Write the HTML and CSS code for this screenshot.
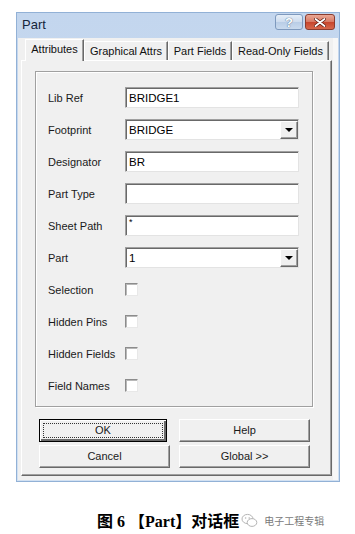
FILE: index.html
```html
<!DOCTYPE html>
<html>
<head>
  <title>Part</title>
  <link rel="stylesheet" href="styles.css">
</head>
<body>
  <div class="window">
    <div class="titlebar">
      <span class="title">Part</span>
      <div class="title-buttons">
        <span class="tbtn help">?</span>
        <span class="tbtn close">
          <svg width="12" height="9" viewBox="0 0 12 9">
            <path d="M1.5 1 L10.5 8 M10.5 1 L1.5 8" stroke="#5a1a10" stroke-width="3.2" stroke-linecap="round"/>
            <path d="M1.5 1 L10.5 8 M10.5 1 L1.5 8" stroke="#fff" stroke-width="1.8" stroke-linecap="round"/>
          </svg>
        </span>
      </div>
    </div>
    <div class="client">
      <div class="tabs">
        <div class="tab active tab-attr">Attributes</div>
        <div class="tab tab-graph">Graphical Attrs</div>
        <div class="tab tab-fields">Part Fields</div>
        <div class="tab tab-ro">Read-Only Fields</div>
      </div>
      <div class="page">
        <div class="group">
          <span class="label">Lib Ref</span>
          <div class="field">BRIDGE1</div>

          <span class="label">Footprint</span>
          <div class="field combo">BRIDGE<span class="drop"></span></div>

          <span class="label">Designator</span>
          <div class="field">BR</div>

          <span class="label">Part Type</span>
          <div class="field"></div>

          <span class="label">Sheet Path</span>
          <div class="field small">*</div>

          <span class="label">Part</span>
          <div class="field combo">1<span class="drop"></span></div>

          <span class="label">Selection</span>
          <div class="check-cell"><span class="check"></span></div>

          <span class="label">Hidden Pins</span>
          <div class="check-cell"><span class="check"></span></div>

          <span class="label">Hidden Fields</span>
          <div class="check-cell"><span class="check"></span></div>

          <span class="label">Field Names</span>
          <div class="check-cell"><span class="check"></span></div>
        </div>
        <div class="buttons">
          <div class="btn default"><span class="focus">OK</span></div>
          <div class="btn">Help</div>
          <div class="btn">Cancel</div>
          <div class="btn">Global &gt;&gt;</div>
        </div>
      </div>
    </div>
  </div>

  <div class="caption">
    <span class="caption-text">图 6 【Part】对话框</span>
    <span class="mark">
      <svg width="17" height="15" viewBox="0 0 17 15">
        <ellipse cx="6.5" cy="6" rx="5.5" ry="4.6" fill="none" stroke="#b5b5b5" stroke-width="1"/>
        <ellipse cx="11" cy="9.5" rx="4.8" ry="3.9" fill="#fff" stroke="#b5b5b5" stroke-width="1"/>
        <circle cx="4.6" cy="5" r="0.8" fill="#b5b5b5"/>
        <circle cx="8.2" cy="5" r="0.8" fill="#b5b5b5"/>
      </svg>
      <span class="mark-text">电子工程专辑</span>
    </span>
  </div>
</body>
</html>
```

FILE: styles.css
```css
body{
  margin: 0;
  background-color: #ffffff;
  font-family: "Liberation Sans", Arial, sans-serif;
  font-size: 11px;
  color: #000;
}

.window{
  box-sizing: border-box;
  width: 324px;
  height: 470px;
  margin: 12px 0 0 16px;
  border: 1px solid #92b1d6;
  background: linear-gradient(#c3d6ee, #d2e1f2);
  padding: 0 1px 1px 1px;
}

.titlebar{
  height: 25px;
  display: flex;
  justify-content: space-between;
  align-items: flex-start;
  padding: 0 3px 0 4px;
}

.title{
  font-size: 13px;
  line-height: 23px;
  color: #15253a;
}

.title-buttons{
  display: flex;
  gap: 2px;
  padding-top: 1px;
}

.tbtn{
  box-sizing: border-box;
  width: 28px;
  height: 16px;
  border-radius: 3px;
  display: flex;
  align-items: center;
  justify-content: center;
}

.help{
  border: 1px solid #7e99bd;
  background: linear-gradient(#e6eef8 0%, #cddcee 50%, #b9cde6 51%, #c9daee 100%);
  color: #ffffff;
  font-weight: bold;
  font-size: 13px;
  text-shadow: 0 0 1px #55708f, 0 0 1px #55708f;
}

.close{
  width: 30px;
  border: 1px solid #8a3b2e;
  background: linear-gradient(#e9a896 0%, #d87862 50%, #c7452c 51%, #d7684c 100%);
}

.client{
  height: 442px;
  box-sizing: border-box;
  background-color: #f0f0f0;
  padding: 1px 6px 4px 3px;
  box-shadow: inset -5px 0 0 #f7f7f7;
}

.tabs{
  display: flex;
  align-items: flex-end;
  height: 21px;
  padding-left: 4px;
  position: relative;
  z-index: 1;
}

.tab{
  box-sizing: border-box;
  height: 19px;
  border-top: 1px solid #ffffff;
  border-left: 1px solid #ffffff;
  border-right: 1px solid #696969;
  box-shadow: inset -1px 0 0 #a0a0a0;
  background-color: #f0f0f0;
  text-align: center;
  line-height: 18px;
  color: #111;
}

.tab.active{
  height: 22px;
  margin-bottom: -1px;
  line-height: 18px;
}

.tab-attr{ width: 59px; }
.tab-graph{ width: 84px; }
.tab-fields{ width: 64px; }
.tab-ro{ width: 97px; }

.page{
  box-sizing: border-box;
  height: 416px;
  background-color: #f0f0f0;
  border-top: 1px solid #ffffff;
  border-left: 1px solid #ffffff;
  border-right: 1px solid #696969;
  border-bottom: 1px solid #696969;
  box-shadow: inset -1px -1px 0 #a0a0a0;
  padding: 10px 0 7px 13px;
}

.group{
  box-sizing: border-box;
  width: 278px;
  height: 336px;
  border: 1px solid #a0a0a0;
  box-shadow: inset 1px 1px 0 #ffffff, 1px 1px 0 #ffffff;
  padding: 15px 0 10px 12px;
  display: grid;
  grid-template-columns: 77px 174px;
  grid-template-rows: repeat(10, 21px);
  row-gap: 11px;
  align-items: center;
}

.label{
  white-space: nowrap;
  color: #1a1a1a;
}

.field{
  box-sizing: border-box;
  height: 21px;
  position: relative;
  background-color: #ffffff;
  border: 1px solid;
  border-color: #a0a0a0 #e3e3e3 #e3e3e3 #a0a0a0;
  box-shadow: inset 1px 1px 0 #696969;
  padding-left: 3px;
  font-size: 11.5px;
  line-height: 20px;
}

.field.small{
  font-size: 9px;
  line-height: 13px;
}

.drop{
  position: absolute;
  right: 0;
  top: 1px;
  box-sizing: border-box;
  width: 18px;
  height: 18px;
  background-color: #f0f0f0;
  border-top: 1px solid #ffffff;
  border-left: 1px solid #ffffff;
  border-right: 1px solid #696969;
  border-bottom: 1px solid #696969;
  box-shadow: inset -1px -1px 0 #a0a0a0;
}

.drop::after{
  content: "";
  position: absolute;
  left: 4px;
  top: 6px;
  border-left: 4px solid transparent;
  border-right: 4px solid transparent;
  border-top: 4px solid #000;
}

.check-cell{
  display: flex;
  align-items: center;
}

.check{
  box-sizing: border-box;
  width: 13px;
  height: 13px;
  background-color: #ffffff;
  border: 1px solid;
  border-color: #8c8c8c #e8e8e8 #e8e8e8 #8c8c8c;
  box-shadow: inset 1px 1px 0 #b8b8b8;
}

.buttons{
  display: grid;
  grid-template-columns: 131px 131px;
  grid-template-rows: 23px 23px;
  column-gap: 9px;
  row-gap: 3px;
  margin: 12px 0 0 4px;
}

.btn{
  box-sizing: border-box;
  background-color: #f0f0f0;
  border-top: 1px solid #ffffff;
  border-left: 1px solid #ffffff;
  border-right: 1px solid #696969;
  border-bottom: 1px solid #696969;
  box-shadow: inset -1px -1px 0 #a0a0a0;
  text-align: center;
  line-height: 21px;
  color: #1a1a1a;
}

.btn.default{
  width: 128px;
  border: 1px solid #000;
  box-shadow: inset 1px 1px 0 #ffffff, inset -2px -2px 0 #696969;
  padding: 3px;
}

.focus{
  display: block;
  height: 100%;
  box-sizing: border-box;
  border: 1px dotted #333;
  line-height: 13px;
}

.caption{
  display: flex;
  align-items: center;
  margin-top: 26px;
  padding-left: 97px;
}

.caption-text{
  font-family: "Liberation Serif", "Noto Sans CJK SC", serif;
  font-weight: bold;
  font-size: 16px;
  color: #000;
}

.mark{
  display: flex;
  align-items: center;
  gap: 6px;
  margin-left: 2px;
}

.mark-text{
  font-family: "Noto Sans CJK SC", sans-serif;
  font-size: 10px;
  color: #7a7a7a;
}
```
